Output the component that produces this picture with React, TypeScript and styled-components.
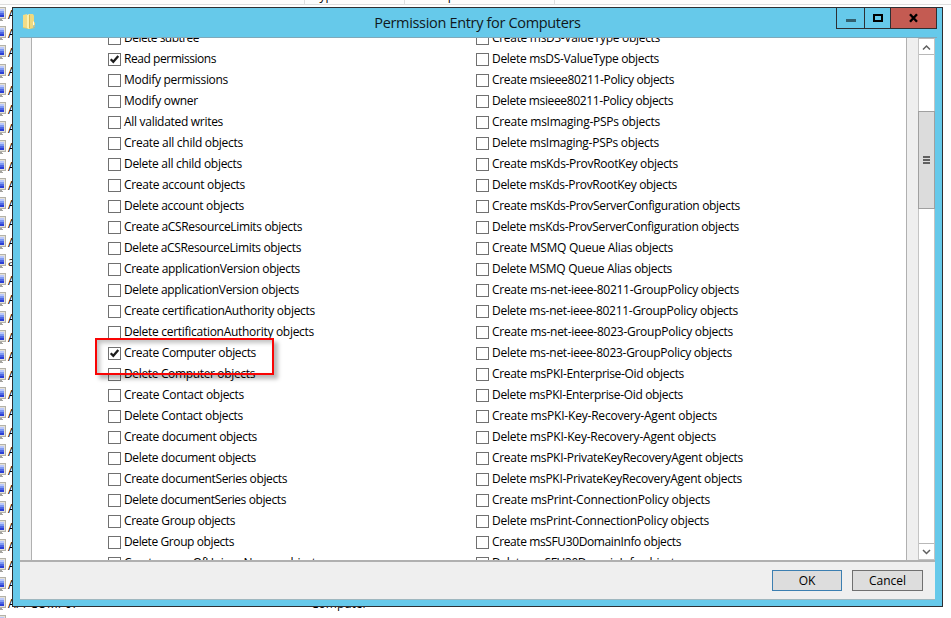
import React from "react";
import styled, { createGlobalStyle } from "styled-components";

const GlobalStyle = createGlobalStyle`
  * { box-sizing: border-box; }
  html, body { margin: 0; overflow: hidden; background: #fff; }
  body { font-family: "Open Sans", "Noto Sans", sans-serif; font-size: 12px; color: #000; }
`;

const Desktop = styled.div`
  position: relative;
  width: 951px;
  height: 618px;
  overflow: hidden;
  background: #fff;
`;

const HeaderStrip = styled.div`
  display: grid;
  grid-template-columns: 305px 100px 150px 1fr;
  height: 5px;
  background: #fcfcfc;
  border-bottom: 1px solid #dedede;
  overflow: hidden;
`;

const HeaderCell = styled.div`
  height: 4px;
  padding-left: 8px;
  line-height: 18px;
  border-right: 1px solid #dedede;
  white-space: nowrap;
  &:last-child { border-right: 0; }
  span { display: block; margin-top: -13px; }
`;

const DirectoryList = styled.div`
  display: flex;
  flex-direction: column;
`;

const DirectoryRow = styled.div`
  display: grid;
  grid-template-columns: 8px 303px 1fr;
  height: 19px;
  line-height: 19px;
  flex: none;
  svg { display: block; margin-top: 2px; }
`;

const Window = styled.section`
  position: absolute;
  left: 12px;
  top: 7px;
  width: 931px;
  height: 600px;
  display: flex;
  flex-direction: column;
  border: 1px solid #2d2f33;
  background: #66c9ea;
  padding: 0 7px 7px;
`;

const TitleBar = styled.header`
  display: grid;
  grid-template-columns: 110px 1fr 110px;
  height: 30px;
  flex: none;
  border-bottom: 1px solid #7fa9ba;
  margin-right: -2px;
`;

const FolderSlot = styled.div`
  padding: 5px 0 0 2px;
  svg { display: block; }
`;

const Title = styled.h1`
  margin: 0;
  padding-right: 2px;
  font-size: 14.5px;
  font-weight: 400;
  letter-spacing: -0.33px;
  line-height: 29px;
  text-align: center;
  color: #101820;
  white-space: nowrap;
`;

const Controls = styled.div`
  display: flex;
  justify-self: end;
  height: 21px;
  border: 1px solid #2d2f33;
  border-top: 0;
`;

const Control = styled.button<{ $width: number; $close?: boolean }>`
  width: ${(p) => p.$width}px;
  height: 20px;
  padding: 0;
  border: 0;
  border-right: ${(p) => (p.$close ? "0" : "1px solid #2d2f33")};
  background: ${(p) => (p.$close ? "#c45b52" : "#66c9ea")};
  svg { display: block; margin: 0 auto; }
`;

const Client = styled.div`
  display: flex;
  height: 522px;
  flex: none;
  background: #efefef;
`;

const Panel = styled.div`
  display: grid;
  grid-template-columns: 368px 1fr;
  width: 876px;
  margin-left: 11px;
  padding-left: 76px;
  border-left: 1px solid #b0b0b0;
  border-right: 1px solid #b0b0b0;
  background: #fff;
  overflow: hidden;
`;

const Column = styled.div`
  margin-top: -10px;
`;

const Option = styled.label`
  display: flex;
  height: 21px;
  align-items: flex-start;
  padding-top: 4px;
`;

const Box = styled.span`
  width: 13px;
  height: 13px;
  flex: none;
  border: 1px solid #707070;
  background: #fff;
  svg { display: block; }
`;

const Caption = styled.span<{ $spacing: number }>`
  margin: -3px 0 0 3px;
  line-height: 18px;
  white-space: nowrap;
  letter-spacing: ${(p) => p.$spacing}px;
`;

const ScrollTrack = styled.div`
  display: flex;
  flex-direction: column;
  width: 17px;
  height: 522px;
  margin-left: 11px;
  border: 1px solid #c4c4c4;
  border-top-color: #b8b8b8;
  background: #fff;
`;

const ArrowButton = styled.div<{ $down?: boolean }>`
  height: 16px;
  flex: none;
  margin-top: ${(p) => (p.$down ? "auto" : "0")};
  border: solid #b8b8b8;
  border-width: ${(p) => (p.$down ? "1px 0 0" : "0 0 1px")};
  svg { display: block; }
`;

const Thumb = styled.div`
  height: 98px;
  flex: none;
  margin: 56px -1px 0;
  border: 1px solid #a0a0a0;
  background: #dcdcdc;
  svg { display: block; margin: 44px auto 0; }
`;

const Footer = styled.footer`
  display: flex;
  justify-content: flex-end;
  gap: 10px;
  height: 40px;
  flex: none;
  padding: 8px 12px 0 0;
  border-top: 2px solid #b0b0b0;
  border-bottom: 1px solid #9fb7bf;
  background: #efefef;
`;

const PushButton = styled.button<{ $primary?: boolean }>`
  width: ${(p) => (p.$primary ? 70 : 71)}px;
  height: 21px;
  padding: 0;
  border: 1px solid ${(p) => (p.$primary ? "#3c7fb1" : "#707070")};
  background: #dddddd;
  font: inherit;
  line-height: 19px;
  color: #000;
`;

const Highlight = styled.div`
  position: absolute;
  left: 95px;
  top: 338px;
  width: 179px;
  height: 37px;
  border: 2px solid #f90404;
  box-shadow: 4px 4px 4px rgba(0, 0, 0, 0.28), inset 3px 3px 4px rgba(0, 0, 0, 0.24);
`;

const Monitor = () => (
  <svg width="7" height="14" viewBox="0 0 7 14">
    <rect x="-8" y="0.5" width="13.5" height="11" fill="#e4e2da" stroke="#b4b2a8" />
    <rect x="-5" y="2" width="9" height="3" fill="#b9c8fb" />
    <rect x="-5" y="4" width="9" height="3" fill="#7f9bf3" />
    <rect x="-5" y="6" width="9" height="2" fill="#4f68e4" />
    <rect x="-5" y="8" width="9" height="2" fill="#2a3fd6" />
    <path d="M0 12h2v1h1v1H0z" fill="#a3a39f" />
  </svg>
);

const Folder = () => (
  <svg width="14" height="17" viewBox="0 0 14 17">
    <path d="M1 2h10l1 1v6l1 1v5l-6 1-6-1z" fill="#e6c963" />
    <path d="M1 2l4-1v14l-4-1z" fill="#f3dc86" />
    <path d="M5 2l2-1v15l-2-1z" fill="#fdf0ae" />
    <path d="M7 1h4l1 2v6l1 1v4l-6 2z" fill="#efd97f" />
    <path d="M7.5 2v13" stroke="#d0ab45" strokeWidth=".7" />
    <path d="M11.5 8.5v4" stroke="#fffbe0" />
    <path d="M12 12v3" stroke="#5aa5dd" strokeWidth=".8" />
  </svg>
);

const Check = () => (
  <svg width="11" height="11" viewBox="0 0 11 11">
    <path d="M1.7 5.2L4.3 7.8 9.3 2.1" fill="none" stroke="#1c1c1c" strokeWidth="2.3" />
  </svg>
);

const Chevron = ({ down }: { down?: boolean }) => (
  <svg width="15" height="15" viewBox="0 0 15 15">
    <path d={down ? "M4 6l3.5 3.5L11 6" : "M4 10.5L7.5 7 11 10.5"} fill="none" stroke="#606060" strokeWidth="1.5" />
  </svg>
);

type Item = { text: string; right: number; checked?: boolean };
const item = (text: string, right: number, checked = false): Item => ({ text, right, checked });
const pair = (name: string, right: number): Item[] => [
  item(`Create ${name} objects`, right),
  item(`Delete ${name} objects`, right - 1),
];

const leftItems: Item[] = [
  item("Delete subtree", 199),
  item("Read permissions", 216, true),
  item("Modify permissions", 228),
  item("Modify owner", 198),
  item("All validated writes", 223),
  ...pair("all child", 243),
  ...pair("account", 245),
  ...pair("aCSResourceLimits", 302),
  ...pair("applicationVersion", 300),
  ...pair("certificationAuthority", 315),
  item("Create Computer objects", 256, true),
  item("Delete Computer objects", 255),
  ...pair("Contact", 244),
  ...pair("document", 257),
  ...pair("documentSeries", 287),
  ...pair("Group", 235),
  item("Create groupOfUniqueNames objects", 321),
];

const rightItems: Item[] = [
  ...pair("msDS-ValueType", 660),
  ...pair("msieee80211-Policy", 674),
  ...pair("msImaging-PSPs", 660),
  ...pair("msKds-ProvRootKey", 678),
  ...pair("msKds-ProvServerConfiguration", 740),
  ...pair("MSMQ Queue Alias", 673),
  ...pair("ms-net-ieee-80211-GroupPolicy", 739),
  ...pair("ms-net-ieee-8023-GroupPolicy", 733),
  ...pair("msPKI-Enterprise-Oid", 684),
  ...pair("msPKI-Key-Recovery-Agent", 717),
  ...pair("msPKI-PrivateKeyRecoveryAgent", 743),
  ...pair("msPrint-ConnectionPolicy", 710),
  ...pair("msSFU30DomainInfo", 681),
];

/** Label whose tracking is adjusted so that its right edge lands on `width`. */
function FittedCaption({ text, width }: { text: string; width: number }) {
  const ref = React.useRef<HTMLSpanElement>(null);
  const [spacing, setSpacing] = React.useState(0);
  React.useLayoutEffect(() => {
    const natural = ref.current!.getBoundingClientRect().width - spacing * text.length;
    setSpacing((width - natural) / text.length);
  }, [text, width]);
  return <Caption ref={ref} $spacing={spacing}>{text}</Caption>;
}

const OptionColumn = ({ items, left }: { items: Item[]; left: number }) => (
  <Column>
    {items.map((it) => (
      <Option key={it.text}>
        <Box>{it.checked && <Check />}</Box>
        <FittedCaption text={it.text} width={it.right - left} />
      </Option>
    ))}
  </Column>
);

const directoryNames = Array.from({ length: 33 }, (_, i) => (i === 13 ? "a" : i === 31 ? "APPCOMP07" : i === 32 ? "" : "A"));

export default function App() {
  return (
    <Desktop>
      <GlobalStyle />
      <HeaderStrip>
        <HeaderCell />
        <HeaderCell><span>Type</span></HeaderCell>
        <HeaderCell><span>Description</span></HeaderCell>
        <HeaderCell />
      </HeaderStrip>
      <DirectoryList>
        {directoryNames.map((name, i) => (
          <DirectoryRow key={i}>
            <Monitor />
            <span>{name}</span>
            <span>{i === 31 ? "Computer" : ""}</span>
          </DirectoryRow>
        ))}
      </DirectoryList>

      <Window>
        <TitleBar>
          <FolderSlot><Folder /></FolderSlot>
          <Title>Permission Entry for Computers</Title>
          <Controls>
            <Control $width={28} aria-label="Minimize">
              <svg width="10" height="20"><rect y="11" width="10" height="3" fill="#32606f" /></svg>
            </Control>
            <Control $width={26} aria-label="Maximize">
              <svg width="10" height="20"><rect x="1" y="7" width="8" height="6" fill="none" stroke="#000" strokeWidth="2" /></svg>
            </Control>
            <Control $width={45} $close aria-label="Close">
              <svg width="9" height="20"><path d="M1 6.3l7 7.4M8 6.3l-7 7.4" stroke="#000" strokeWidth="2.4" /></svg>
            </Control>
          </Controls>
        </TitleBar>
        <Client>
          <Panel>
            <OptionColumn items={leftItems} left={124} />
            <OptionColumn items={rightItems} left={492} />
          </Panel>
          <ScrollTrack>
            <ArrowButton><Chevron /></ArrowButton>
            <Thumb>
              <svg width="7" height="8"><path d="M0 1h7M0 4h7M0 7h7" stroke="#606060" strokeWidth="2" /></svg>
            </Thumb>
            <ArrowButton $down><Chevron down /></ArrowButton>
          </ScrollTrack>
        </Client>
        <Footer>
          <PushButton $primary>OK</PushButton>
          <PushButton>Cancel</PushButton>
        </Footer>
      </Window>
      <Highlight />
    </Desktop>
  );
}
